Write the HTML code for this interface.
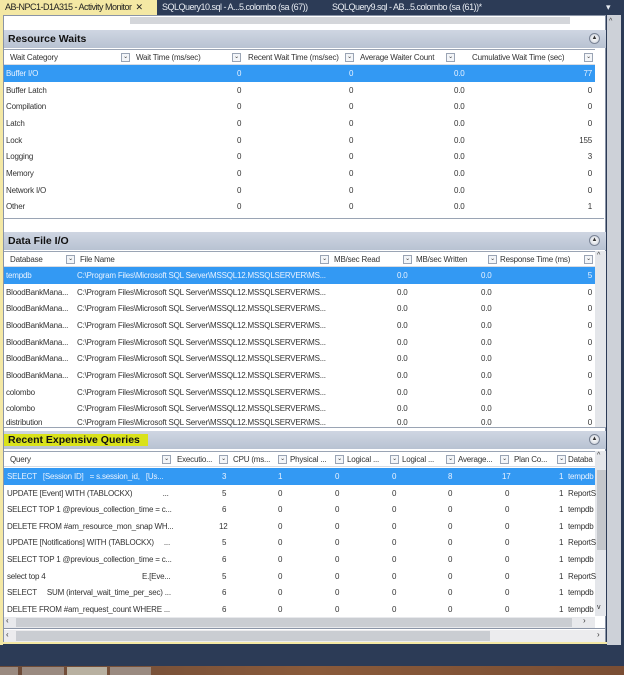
<!DOCTYPE html>
<html><head><meta charset="utf-8"><style>
*{margin:0;padding:0;box-sizing:border-box}
body{width:624px;height:675px;overflow:hidden;background:#2c3b56;font-family:"Liberation Sans",sans-serif;font-size:8px;letter-spacing:-0.2px;color:#333;position:relative}
.a{position:absolute;white-space:nowrap}
.tab{top:0;height:15px;line-height:14px;font-size:9px;letter-spacing:-0.5px}
.panel{left:3px;top:15px;width:603px;height:629px;background:#fff;border:1px solid #8a94a6}
.hdr{left:4px;width:602px;height:18px;background:linear-gradient(#cfd6e2,#b8c2d2);font-weight:bold;font-size:10.5px;letter-spacing:0;line-height:18px;padding-left:4px;color:#111}
.tog{width:11px;height:11px;border-radius:50%;border:1px solid #7a8496;background:radial-gradient(#fff,#c8ced8);right:6px;top:3px;font-size:6px;line-height:9px;text-align:center;color:#333}
.ch{left:4px;width:591px;height:16px;background:#fff;border-bottom:1px solid #d8dce3;border-top:1px solid #9aa4b4;line-height:15px}
.dd{width:9px;height:9px;border:1px solid #9aa4b4;background:#f3f5f8;top:3px;font-size:6px;line-height:7px;text-align:center;color:#333}
.row{left:4px;width:591px;height:17px;line-height:17px}
.sel{background:#3399f3;color:#e8f2ff}
.vs{width:11px;background:#e4e6ea}
.r{text-align:right}
</style></head><body>
<div class="a tab" style="left:0;width:157px;background:#f4e8a4;padding-left:5px;color:#222">AB-NPC1-D1A315 - Activity Monitor &nbsp;✕</div>
<div class="a tab" style="left:162px;color:#e8ecf2">SQLQuery10.sql - A...5.colombo (sa (67))</div>
<div class="a tab" style="left:332px;color:#e8ecf2">SQLQuery9.sql - AB...5.colombo (sa (61))*</div>
<div class="a tab" style="left:606px;color:#e8ecf2">▾</div>
<div class="a" style="left:0;top:15px;width:3px;height:630px;background:#f4e8a4"></div>
<div class="a panel"></div>
<div class="a" style="left:4px;top:16px;width:598px;height:9px;background:#fff"></div>
<div class="a" style="left:130px;top:17px;width:440px;height:7px;background:#d4d6da"></div>
<div class="a" style="left:607px;top:15px;width:14px;height:630px;background:#cdd1d8"></div>
<div class="a" style="left:609px;top:18px;font-size:7px;color:#333">^</div>
<div class="a" style="left:621px;top:15px;width:3px;height:630px;background:#2c3b56"></div>

<div class="a hdr" style="top:30px">Resource Waits<div class="a tog">▲</div></div>
<div class="a ch" style="top:49px">
<span class="a" style="left:6px">Wait Category</span><span class="a dd" style="left:117px">⌄</span>
<span class="a" style="left:132px">Wait Time (ms/sec)</span><span class="a dd" style="left:228px">⌄</span>
<span class="a" style="left:244px">Recent Wait Time (ms/sec)</span><span class="a dd" style="left:341px">⌄</span>
<span class="a" style="left:356px">Average Waiter Count</span><span class="a dd" style="left:442px">⌄</span>
<span class="a" style="left:468px">Cumulative Wait Time (sec)</span><span class="a dd" style="left:580px">⌄</span>
</div>
<div class="a row sel" style="top:65px"><span class="a" style="left:2px">Buffer I/O</span><span class="a" style="left:233px">0</span><span class="a" style="left:345px">0</span><span class="a" style="left:450px">0.0</span><span class="a r" style="right:3px">77</span></div>
<div class="a row" style="top:82px"><span class="a" style="left:2px">Buffer Latch</span><span class="a" style="left:233px">0</span><span class="a" style="left:345px">0</span><span class="a" style="left:450px">0.0</span><span class="a r" style="right:3px">0</span></div>
<div class="a row" style="top:98px"><span class="a" style="left:2px">Compilation</span><span class="a" style="left:233px">0</span><span class="a" style="left:345px">0</span><span class="a" style="left:450px">0.0</span><span class="a r" style="right:3px">0</span></div>
<div class="a row" style="top:115px"><span class="a" style="left:2px">Latch</span><span class="a" style="left:233px">0</span><span class="a" style="left:345px">0</span><span class="a" style="left:450px">0.0</span><span class="a r" style="right:3px">0</span></div>
<div class="a row" style="top:132px"><span class="a" style="left:2px">Lock</span><span class="a" style="left:233px">0</span><span class="a" style="left:345px">0</span><span class="a" style="left:450px">0.0</span><span class="a r" style="right:3px">155</span></div>
<div class="a row" style="top:148px"><span class="a" style="left:2px">Logging</span><span class="a" style="left:233px">0</span><span class="a" style="left:345px">0</span><span class="a" style="left:450px">0.0</span><span class="a r" style="right:3px">3</span></div>
<div class="a row" style="top:165px"><span class="a" style="left:2px">Memory</span><span class="a" style="left:233px">0</span><span class="a" style="left:345px">0</span><span class="a" style="left:450px">0.0</span><span class="a r" style="right:3px">0</span></div>
<div class="a row" style="top:182px"><span class="a" style="left:2px">Network I/O</span><span class="a" style="left:233px">0</span><span class="a" style="left:345px">0</span><span class="a" style="left:450px">0.0</span><span class="a r" style="right:3px">0</span></div>
<div class="a row" style="top:198px"><span class="a" style="left:2px">Other</span><span class="a" style="left:233px">0</span><span class="a" style="left:345px">0</span><span class="a" style="left:450px">0.0</span><span class="a r" style="right:3px">1</span></div>
<div class="a" style="left:4px;top:218px;width:600px;height:12px;border-top:1px solid #9aa4b4;background:#fff"></div>

<div class="a hdr" style="top:232px">Data File I/O<div class="a tog">▲</div></div>
<div class="a ch" style="top:251px">
<span class="a" style="left:6px">Database</span><span class="a dd" style="left:62px">⌄</span>
<span class="a" style="left:76px">File Name</span><span class="a dd" style="left:316px">⌄</span>
<span class="a" style="left:330px">MB/sec Read</span><span class="a dd" style="left:399px">⌄</span>
<span class="a" style="left:412px">MB/sec Written</span><span class="a dd" style="left:484px">⌄</span>
<span class="a" style="left:496px">Response Time (ms)</span><span class="a dd" style="left:580px">⌄</span>
</div>
<div class="a vs" style="left:595px;top:251px;height:176px"></div>
<div class="a" style="left:597px;top:252px;font-size:7px">^</div>
<div class="a row sel" style="top:267px"><span class="a" style="left:2px">tempdb</span><span class="a" style="left:73px">C:\Program Files\Microsoft SQL Server\MSSQL12.MSSQLSERVER\MS...</span><span class="a" style="left:393px">0.0</span><span class="a" style="left:477px">0.0</span><span class="a r" style="right:3px">5</span></div>
<div class="a row" style="top:284px"><span class="a" style="left:2px">BloodBankMana...</span><span class="a" style="left:73px">C:\Program Files\Microsoft SQL Server\MSSQL12.MSSQLSERVER\MS...</span><span class="a" style="left:393px">0.0</span><span class="a" style="left:477px">0.0</span><span class="a r" style="right:3px">0</span></div>
<div class="a row" style="top:300px"><span class="a" style="left:2px">BloodBankMana...</span><span class="a" style="left:73px">C:\Program Files\Microsoft SQL Server\MSSQL12.MSSQLSERVER\MS...</span><span class="a" style="left:393px">0.0</span><span class="a" style="left:477px">0.0</span><span class="a r" style="right:3px">0</span></div>
<div class="a row" style="top:317px"><span class="a" style="left:2px">BloodBankMana...</span><span class="a" style="left:73px">C:\Program Files\Microsoft SQL Server\MSSQL12.MSSQLSERVER\MS...</span><span class="a" style="left:393px">0.0</span><span class="a" style="left:477px">0.0</span><span class="a r" style="right:3px">0</span></div>
<div class="a row" style="top:334px"><span class="a" style="left:2px">BloodBankMana...</span><span class="a" style="left:73px">C:\Program Files\Microsoft SQL Server\MSSQL12.MSSQLSERVER\MS...</span><span class="a" style="left:393px">0.0</span><span class="a" style="left:477px">0.0</span><span class="a r" style="right:3px">0</span></div>
<div class="a row" style="top:350px"><span class="a" style="left:2px">BloodBankMana...</span><span class="a" style="left:73px">C:\Program Files\Microsoft SQL Server\MSSQL12.MSSQLSERVER\MS...</span><span class="a" style="left:393px">0.0</span><span class="a" style="left:477px">0.0</span><span class="a r" style="right:3px">0</span></div>
<div class="a row" style="top:367px"><span class="a" style="left:2px">BloodBankMana...</span><span class="a" style="left:73px">C:\Program Files\Microsoft SQL Server\MSSQL12.MSSQLSERVER\MS...</span><span class="a" style="left:393px">0.0</span><span class="a" style="left:477px">0.0</span><span class="a r" style="right:3px">0</span></div>
<div class="a row" style="top:384px"><span class="a" style="left:2px">colombo</span><span class="a" style="left:73px">C:\Program Files\Microsoft SQL Server\MSSQL12.MSSQLSERVER\MS...</span><span class="a" style="left:393px">0.0</span><span class="a" style="left:477px">0.0</span><span class="a r" style="right:3px">0</span></div>
<div class="a row" style="top:400px"><span class="a" style="left:2px">colombo</span><span class="a" style="left:73px">C:\Program Files\Microsoft SQL Server\MSSQL12.MSSQLSERVER\MS...</span><span class="a" style="left:393px">0.0</span><span class="a" style="left:477px">0.0</span><span class="a r" style="right:3px">0</span></div>
<div class="a row" style="top:417px;height:10px;overflow:hidden;line-height:12px"><span class="a" style="left:2px">distribution</span><span class="a" style="left:73px">C:\Program Files\Microsoft SQL Server\MSSQL12.MSSQLSERVER\MS...</span><span class="a" style="left:393px">0.0</span><span class="a" style="left:477px">0.0</span><span class="a r" style="right:3px">0</span></div>
<div class="a" style="left:4px;top:427px;width:602px;height:1px;background:#9aa4b4"></div>

<div class="a hdr" style="top:431px;padding-left:0"><span style="background:#d9e21a;padding:0 8px 0 4px">Recent Expensive Queries</span><div class="a tog">▲</div></div>
<div class="a ch" style="top:451px">
<span class="a" style="left:6px">Query</span><span class="a dd" style="left:158px">⌄</span>
<span class="a" style="left:173px">Executio...</span><span class="a dd" style="left:215px">⌄</span>
<span class="a" style="left:229px">CPU (ms...</span><span class="a dd" style="left:274px">⌄</span>
<span class="a" style="left:286px">Physical ...</span><span class="a dd" style="left:331px">⌄</span>
<span class="a" style="left:343px">Logical ...</span><span class="a dd" style="left:386px">⌄</span>
<span class="a" style="left:398px">Logical ...</span><span class="a dd" style="left:442px">⌄</span>
<span class="a" style="left:454px">Average...</span><span class="a dd" style="left:496px">⌄</span>
<span class="a" style="left:510px">Plan Co...</span><span class="a dd" style="left:553px">⌄</span>
<span class="a" style="left:564px">Databa</span>
</div>
<div class="a vs" style="left:595px;top:451px;height:165px"></div>
<div class="a" style="left:597px;top:470px;width:9px;height:80px;background:#c4c7cc"></div>
<div class="a" style="left:597px;top:452px;font-size:7px">^</div>
<div class="a" style="left:597px;top:604px;font-size:7px">v</div>
<div class="a row sel" style="top:468px"><span class="a" style="left:3px">SELECT &nbsp;&nbsp;[Session ID] &nbsp;&nbsp;= s.session_id, &nbsp;&nbsp;[Us...</span><span class="a" style="left:218px">3</span><span class="a" style="left:274px">1</span><span class="a" style="left:331px">0</span><span class="a" style="left:388px">0</span><span class="a" style="left:444px">8</span><span class="a" style="left:498px">17</span><span class="a" style="left:555px">1</span><span class="a" style="left:564px">tempdb</span></div>
<div class="a row" style="top:485px"><span class="a" style="left:3px">UPDATE [Event] WITH (TABLOCKX) &nbsp;&nbsp;&nbsp;&nbsp;&nbsp;&nbsp;&nbsp;&nbsp;&nbsp;&nbsp;&nbsp;&nbsp;&nbsp;&nbsp;...</span><span class="a" style="left:218px">5</span><span class="a" style="left:274px">0</span><span class="a" style="left:331px">0</span><span class="a" style="left:388px">0</span><span class="a" style="left:444px">0</span><span class="a" style="left:501px">0</span><span class="a" style="left:555px">1</span><span class="a" style="left:564px">ReportS</span></div>
<div class="a row" style="top:501px"><span class="a" style="left:3px">SELECT TOP 1 @previous_collection_time = c...</span><span class="a" style="left:218px">6</span><span class="a" style="left:274px">0</span><span class="a" style="left:331px">0</span><span class="a" style="left:388px">0</span><span class="a" style="left:444px">0</span><span class="a" style="left:501px">0</span><span class="a" style="left:555px">1</span><span class="a" style="left:564px">tempdb</span></div>
<div class="a row" style="top:518px"><span class="a" style="left:3px">DELETE FROM #am_resource_mon_snap WH...</span><span class="a" style="left:215px">12</span><span class="a" style="left:274px">0</span><span class="a" style="left:331px">0</span><span class="a" style="left:388px">0</span><span class="a" style="left:444px">0</span><span class="a" style="left:501px">0</span><span class="a" style="left:555px">1</span><span class="a" style="left:564px">tempdb</span></div>
<div class="a row" style="top:534px"><span class="a" style="left:3px">UPDATE [Notifications] WITH (TABLOCKX) &nbsp;&nbsp;&nbsp;&nbsp;...</span><span class="a" style="left:218px">5</span><span class="a" style="left:274px">0</span><span class="a" style="left:331px">0</span><span class="a" style="left:388px">0</span><span class="a" style="left:444px">0</span><span class="a" style="left:501px">0</span><span class="a" style="left:555px">1</span><span class="a" style="left:564px">ReportS</span></div>
<div class="a row" style="top:551px"><span class="a" style="left:3px">SELECT TOP 1 @previous_collection_time = c...</span><span class="a" style="left:218px">6</span><span class="a" style="left:274px">0</span><span class="a" style="left:331px">0</span><span class="a" style="left:388px">0</span><span class="a" style="left:444px">0</span><span class="a" style="left:501px">0</span><span class="a" style="left:555px">1</span><span class="a" style="left:564px">tempdb</span></div>
<div class="a row" style="top:568px"><span class="a" style="left:3px">select top 4</span><span class="a" style="left:138px">E.[Eve...</span><span class="a" style="left:218px">5</span><span class="a" style="left:274px">0</span><span class="a" style="left:331px">0</span><span class="a" style="left:388px">0</span><span class="a" style="left:444px">0</span><span class="a" style="left:501px">0</span><span class="a" style="left:555px">1</span><span class="a" style="left:564px">ReportS</span></div>
<div class="a row" style="top:584px"><span class="a" style="left:3px">SELECT &nbsp;&nbsp;&nbsp;&nbsp;SUM (interval_wait_time_per_sec) ...</span><span class="a" style="left:218px">6</span><span class="a" style="left:274px">0</span><span class="a" style="left:331px">0</span><span class="a" style="left:388px">0</span><span class="a" style="left:444px">0</span><span class="a" style="left:501px">0</span><span class="a" style="left:555px">1</span><span class="a" style="left:564px">tempdb</span></div>
<div class="a row" style="top:601px"><span class="a" style="left:3px">DELETE FROM #am_request_count WHERE ...</span><span class="a" style="left:218px">6</span><span class="a" style="left:274px">0</span><span class="a" style="left:331px">0</span><span class="a" style="left:388px">0</span><span class="a" style="left:444px">0</span><span class="a" style="left:501px">0</span><span class="a" style="left:555px">1</span><span class="a" style="left:564px">tempdb</span></div>
<div class="a" style="left:4px;top:617px;width:591px;height:11px;background:#e8e9ec"></div>
<div class="a" style="left:16px;top:618px;width:556px;height:9px;background:#cacdd2"></div>
<div class="a" style="left:6px;top:616px;font-size:8px">‹</div>
<div class="a" style="left:583px;top:616px;font-size:8px">›</div>
<div class="a" style="left:4px;top:628px;width:602px;height:1px;background:#8a94a6"></div>
<div class="a" style="left:4px;top:630px;width:601px;height:12px;background:#ececee"></div>
<div class="a" style="left:16px;top:631px;width:474px;height:10px;background:#cacdd2"></div>
<div class="a" style="left:6px;top:630px;font-size:8px">‹</div>
<div class="a" style="left:597px;top:630px;font-size:8px">›</div>
<div class="a" style="left:3px;top:642px;width:604px;height:2px;background:#f4e8a4"></div>

<div class="a" style="left:0;top:666px;width:624px;height:9px;background:linear-gradient(90deg,#6b4a38,#8a5a3a 50%,#7a4e34)"></div>
<div class="a" style="left:0;top:667px;width:18px;height:8px;background:#9a8a80"></div>
<div class="a" style="left:22px;top:667px;width:42px;height:8px;background:#9a8a80"></div>
<div class="a" style="left:67px;top:667px;width:40px;height:8px;background:#b8b0a0"></div>
<div class="a" style="left:110px;top:667px;width:41px;height:8px;background:#9a8a80"></div>
</body></html>
